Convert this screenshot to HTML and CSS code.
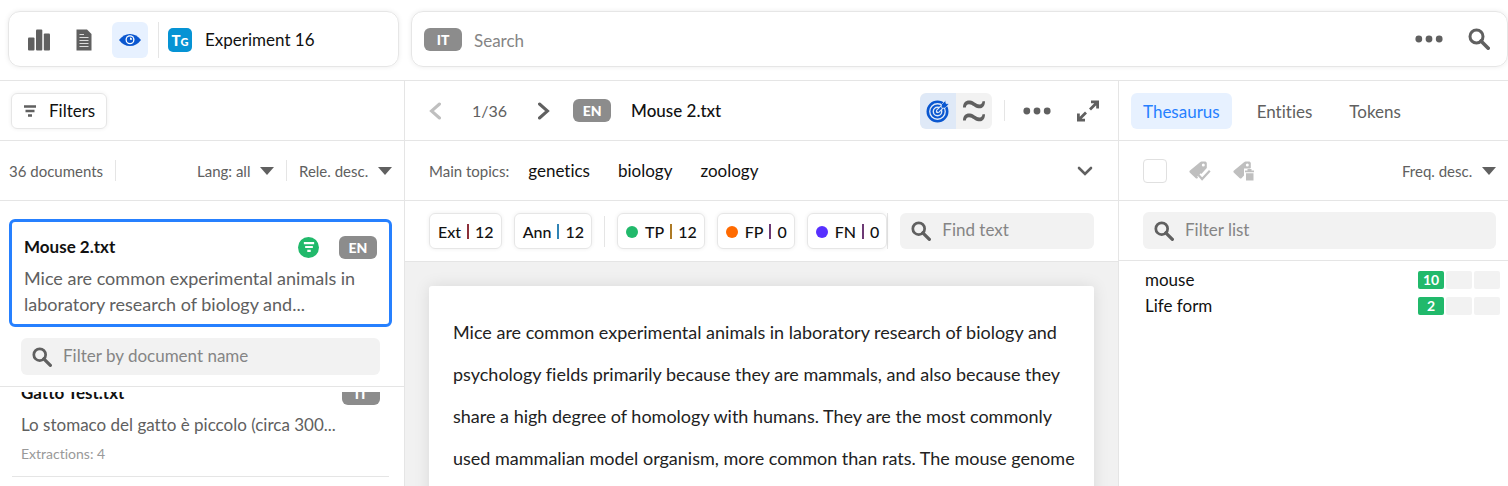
FILE: index.html
```html
<!DOCTYPE html>
<html lang="en">
<head>
<meta charset="utf-8">
<title>Experiment 16</title>
<meta name="viewport" content="width=device-width, initial-scale=1">
<link rel="stylesheet" href="styles.css">
</head>
<body>
<svg class="defs" aria-hidden="true">
  <symbol id="i-search" viewBox="0 0 22 22"><circle cx="8.500" cy="8.500" r="6.500" fill="none" stroke="currentColor" stroke-width="3"/><path d="M13 13l7.200 7.200" stroke="currentColor" stroke-width="3.600" stroke-linecap="round"/></symbol>
  <symbol id="i-dots" viewBox="0 0 28 8"><circle cx="3.800" cy="4" r="3.400" fill="currentColor"/><circle cx="14" cy="4" r="3.400" fill="currentColor"/><circle cx="24.200" cy="4" r="3.400" fill="currentColor"/></symbol>
  <symbol id="i-filter" viewBox="0 0 14 12"><path d="M1 1.500h12M2.500 6h9M5 10.500h4" stroke="currentColor" stroke-width="2.400"/></symbol>
  <symbol id="i-caret" viewBox="0 0 14 8"><path d="M0 0h14L7 8z" fill="currentColor"/></symbol>
  <symbol id="i-tag" viewBox="0 0 22 20"><path d="M12.500 0.500H16.500L17.800 1.800V7L8.500 17.300Q7.500 18 6.500 17L0.700 11.500Q0 10.500 0.700 9.700L11 1.200Q11.800.5 12.500.5z" fill="currentColor"/><circle cx="14.300" cy="4" r="1.500" fill="#fff"/></symbol>
</svg>

<header class="topbar">
  <nav class="panel nav-panel">
    <button class="icon-btn" aria-label="Statistics"><svg width="22" height="22" viewBox="0 0 22 22"><rect x="0" y="8.500" width="6.500" height="13" rx="1" fill="#606060"/><rect x="8" y="0.500" width="6.300" height="21" rx="1" fill="#606060"/><rect x="15.800" y="4.500" width="6.200" height="17" rx="1" fill="#606060"/></svg></button>
    <button class="icon-btn" aria-label="Document"><svg width="16" height="22" viewBox="0 0 16 22"><path d="M.5.500H11L15.500 5V21.500H.5z" fill="#606060"/><path d="M3.500 5.500h4.500M3.500 8.500h9M3.500 11.500h9M3.500 14.500h9M3.500 17.500h9" stroke="#ddd" stroke-width="1"/></svg></button>
    <button class="icon-btn active" aria-label="View"><svg width="22" height="14" viewBox="0 0 22 14"><path d="M0 7Q4.500 1 11 1T22 7Q17.500 13 11 13T0 7z" fill="#0a57d0"/><circle cx="11" cy="6.800" r="4.500" fill="#fff"/><circle cx="11" cy="6.800" r="3.200" fill="#0a57d0"/><path d="M11 6.800V4.600A2.200 2.200 0 0 1 13.200 6.800z" fill="#fff"/></svg></button>
    <span class="rule tall"></span>
    <span class="logo">T<small>G</small></span>
    <span class="project">Experiment 16</span>
  </nav>
  <form class="panel search-panel">
    <span class="lang">IT</span>
    <input class="search-input" type="search" placeholder="Search" aria-label="Search">
    <button class="plain" type="button" aria-label="More"><svg width="28" height="8"><use href="#i-dots"/></svg></button>
    <button class="plain" type="button" aria-label="Run search"><svg width="22" height="22"><use href="#i-search"/></svg></button>
  </form>
</header>

<main class="columns">
  <aside class="col documents">
    <div class="bar">
      <button class="btn filters"><svg width="14" height="12"><use href="#i-filter"/></svg>Filters</button>
    </div>
    <div class="bar sortbar">
      <span>36 documents</span><span class="rule"></span>
      <label class="picker push"><select aria-label="Language"><option>Lang: all</option></select><svg width="14" height="8"><use href="#i-caret"/></svg></label>
      <span class="rule"></span>
      <label class="picker"><select aria-label="Sort documents"><option>Rele. desc.</option></select><svg width="14" height="8"><use href="#i-caret"/></svg></label>
    </div>
    <div class="current">
      <article class="card">
        <div class="card-head">
          <h2>Mouse 2.txt</h2>
          <span class="match"><svg width="12" height="12" viewBox="0 0 14 12"><use href="#i-filter" width="14" height="12"/></svg></span>
          <span class="lang">EN</span>
        </div>
        <p>Mice are common experimental animals in laboratory research of biology and...</p>
      </article>
      <label class="field"><svg width="20" height="20"><use href="#i-search"/></svg><input type="text" placeholder="Filter by document name" aria-label="Filter by document name"></label>
    </div>
    <div class="list">
      <article class="item">
        <div class="card-head"><h2>Gatto Test.txt</h2><span class="lang">IT</span></div>
        <p>Lo stomaco del gatto è piccolo (circa 300...</p>
        <small>Extractions: 4</small>
      </article>
    </div>
  </aside>

  <section class="col viewer">
    <div class="bar viewbar">
      <button class="plain faint" aria-label="Previous"><svg width="12" height="18" viewBox="0 0 12 18"><path d="M10.500 2L2.500 9l8 7" fill="none" stroke="currentColor" stroke-width="3" stroke-linecap="round"/></svg></button>
      <span class="count">1/36</span>
      <button class="plain" aria-label="Next"><svg width="12" height="18" viewBox="0 0 12 18"><path d="M1.500 2l8 7-8 7" fill="none" stroke="currentColor" stroke-width="3" stroke-linecap="round"/></svg></button>
      <span class="lang">EN</span>
      <h1>Mouse 2.txt</h1>
      <div class="toggle push">
        <button class="on" aria-label="Exact"><svg width="24" height="24" viewBox="0 0 24 24" fill="none" stroke="#0a57d0"><circle cx="11.500" cy="12.500" r="9.700" stroke-width="2.600"/><circle cx="11.500" cy="12.500" r="6" stroke-width="2.200"/><circle cx="11.500" cy="12.500" r="2.600" stroke-width="1.800"/><path d="M11.500 12.500L18 6" stroke="#dfe9f7" stroke-width="4"/><path d="M11.500 12.500L18 6" stroke-width="1.800"/><path d="M15.500 5.500L19.500 1.500 20 4.500 23 5 19 9H15.500z" fill="#0a57d0" stroke="#dfe9f7" stroke-width=".6"/></svg></button>
        <button aria-label="Approximate"><svg width="24" height="24" viewBox="0 0 24 24" fill="#606060"><path id="wave" d="M1 8.500C1 3.500 4 1 8 1.500C12 2 14 5.500 17.500 5.500C19.500 5.500 20.300 4 20.500 2.200H23C23 7 20.500 9.800 16.500 9.300C12.500 8.800 10.500 5.300 7 5.300C4.800 5.300 4 6.800 3.800 8.500z"/><use href="#wave" y="13"/></svg></button>
      </div>
      <span class="rule"></span>
      <button class="plain" aria-label="More actions"><svg width="28" height="8"><use href="#i-dots"/></svg></button>
      <button class="plain" aria-label="Expand"><svg width="24" height="24" viewBox="0 0 24 24" fill="none" stroke="currentColor" stroke-width="2.800"><path d="M15 2.900h6.600V9.500M21.500 3L14 10.500M2.400 14.500v6.600H9M2.500 21L10 13.500"/></svg></button>
    </div>
    <div class="bar topics">
      <span class="label">Main topics:</span>
      <span>genetics</span><span>biology</span><span>zoology</span>
      <button class="plain push" aria-label="Show topics"><svg width="16" height="10" viewBox="0 0 16 10"><path d="M2 2l6 6 6-6" fill="none" stroke="currentColor" stroke-width="2.600" stroke-linecap="round"/></svg></button>
    </div>
    <div class="bar metrics">
      <div class="counters">
        <button class="btn">Ext <i class="bar-red"></i> 12</button>
        <button class="btn">Ann <i class="bar-blue"></i> 12</button>
        <span class="rule mid"></span>
        <button class="btn"><b class="dot green"></b>TP <i class="bar-gold"></i> 12</button>
        <button class="btn"><b class="dot orange"></b>FP <i class="bar-plum"></i> 0</button>
        <button class="btn"><b class="dot violet"></b>FN <i class="bar-plum"></i> 0</button>
      </div>
      <label class="field"><svg width="20" height="20"><use href="#i-search"/></svg><input type="text" placeholder="Find text" aria-label="Find text"></label>
    </div>
    <div class="stage">
      <article class="page">Mice are common experimental animals in laboratory research of biology and psychology fields primarily because they are mammals, and also because they share a high degree of homology with humans. They are the most commonly used mammalian model organism, more common than rats. The mouse genome</article>
    </div>
  </section>

  <aside class="col terms">
    <div class="bar tabs">
      <button class="selected">Thesaurus</button><button>Entities</button><button>Tokens</button>
    </div>
    <div class="bar termtools">
      <input class="check" type="checkbox" aria-label="Select all">
      <button class="plain faint" aria-label="Confirm tags"><svg width="22" height="20" viewBox="0 0 22 20"><use href="#i-tag" width="22" height="20"/><path d="M10 14l3.300 3.500L20.500 9.500" fill="none" stroke="#fff" stroke-width="5"/><path d="M9.500 14l3.600 4L20.800 9.800" fill="none" stroke="currentColor" stroke-width="2.200"/></svg></button>
      <button class="plain faint" aria-label="Delete tags"><svg width="22" height="20" viewBox="0 0 22 20"><use href="#i-tag" width="22" height="20"/><path d="M11 7.500h11V20H11z" fill="#fff"/><path d="M12 9.500h9v1.800h-9zM13 12.200h7.500V19.500H13zM14.500 8h4v1.500h-4z" fill="currentColor"/></svg></button>
      <label class="picker push"><select aria-label="Sort terms"><option>Freq. desc.</option></select><svg width="14" height="8"><use href="#i-caret"/></svg></label>
    </div>
    <div class="bar termfilter">
      <label class="field"><svg width="20" height="20"><use href="#i-search"/></svg><input type="text" placeholder="Filter list" aria-label="Filter list"></label>
    </div>
    <ul class="term-list">
      <li><span>mouse</span><b class="hit">10</b><b></b><b></b></li>
      <li><span>Life form</span><b class="hit">2</b><b></b><b></b></li>
    </ul>
  </aside>
</main>
</body>
</html>
```
FILE: styles.css
```css
* { box-sizing: border-box; }

body {
  margin: 0;
  height: 100vh;
  display: flex;
  flex-direction: column;
  overflow: hidden;
  background: #fff;
  color: #111;
  font: 17px/26px Lato, "Open Sans", sans-serif;
  font-variant-ligatures: none;
}

h1, h2, p, ul { margin: 0; padding: 0; }
h1, h2 { font-size: 17px; }
h1 { font-weight: 500; }
button, input, select { font: inherit; color: inherit; border: 0; background: none; margin: 0; padding: 0; }
button { cursor: pointer; }
svg { display: block; flex: none; }
input::placeholder { color: #858585; opacity: 1; }
.defs { display: none; }
.push { margin-left: auto; }
.rule { width: 1px; height: 21px; background: #e5e5e5; flex: none; }
.rule.tall { height: 36px; }
.rule.mid { height: 31px; }
.plain { display: flex; align-items: center; color: #606060; flex: none; }
.faint { color: #bfbfbf; }

.lang {
  width: 38px;
  height: 23px;
  flex: none;
  border-radius: 6px;
  background: #8c8c8c;
  color: #fff;
  font-size: 14px;
  font-weight: 900;
  line-height: 23px;
  text-align: center;
}

/* Top bar */
.topbar {
  display: grid;
  grid-template-columns: minmax(0, 391fr) minmax(0, 1097fr);
  gap: 12px;
  align-items: center;
  height: 81px;
  flex: none;
  padding: 0 0 2px 8px;
  border-bottom: 1px solid #e5e5e5;
}
.panel {
  display: flex;
  align-items: center;
  height: 56px;
  border: 1px solid #e6e6e6;
  border-radius: 12px;
  box-shadow: 0 0 5px rgba(0, 0, 0, .08);
}
.nav-panel { padding: 2px 12px 0; }
.icon-btn {
  display: flex;
  align-items: center;
  justify-content: center;
  width: 36px;
  height: 36px;
  margin-right: 10px;
  border-radius: 6px;
}
.icon-btn.active { background: #e7f1ff; }
.icon-btn:first-child { margin-right: 9px; }
.logo {
  width: 24px;
  height: 24px;
  margin: 0 13px 0 9px;
  border-radius: 5px;
  background: #0693d4;
  color: #fff;
  font-size: 15px;
  font-weight: 900;
  line-height: 24px;
  text-align: center;
}
.logo small { font-size: 11px; }
.search-panel { padding: 0 17px 0 12px; }
.search-input { flex: 1; min-width: 0; margin: 0 12px; padding-top: 4px; }
.search-panel .plain + .plain { margin-left: 25px; }

/* Columns */
.columns {
  flex: 1;
  min-height: 0;
  display: grid;
  grid-template-columns: minmax(0, 404fr) minmax(0, 714fr) minmax(0, 390fr);
}
.col { display: flex; flex-direction: column; min-width: 0; min-height: 0; overflow: hidden; }
.col + .col { border-left: 1px solid #e5e5e5; }
.bar {
  display: flex;
  align-items: center;
  flex: none;
  height: 60px;
  border-bottom: 1px solid #e5e5e5;
}

.btn {
  display: flex;
  align-items: center;
  height: 36px;
  padding: 1px 7px 0 8px;
  border: 1px solid #e6e6e6;
  border-radius: 6px;
  box-shadow: 0 0 4px rgba(0, 0, 0, .07);
  white-space: nowrap;
}

.field {
  display: flex;
  align-items: center;
  gap: 11px;
  height: 37px;
  padding: 0 11px;
  border-radius: 6px;
  background: #f2f2f2;
  color: #606060;
}
.field input { flex: 1; min-width: 0; width: 0; padding-bottom: 2px; }

.picker { display: flex; align-items: center; color: #606060; }
.picker select { appearance: none; }
.picker svg { margin-left: 9px; pointer-events: none; }

/* Documents */
.documents .bar { padding: 0 12px 0 11px; }
.documents .filters { gap: 12px; padding: 1px 11px 0 11px; }
.filters svg { color: #606060; }
.documents .sortbar { padding-left: 9px; }
.sortbar, .termtools { font-size: 15px; color: #606060; }
.sortbar .rule { margin: 0 12px; }
.current { padding: 18px 12px 11px 9px; border-bottom: 1px solid #e5e5e5; }
.card { padding: 12px 12px 7px; border: 3px solid #2680ff; border-radius: 6px; color: #606060; }
.card p { font-size: 18px; }
.card-head { display: flex; align-items: center; gap: 20px; margin-bottom: 6px; }
.card-head h2 { flex: 1; color: #111; line-height: 26px; }
.card .card-head { margin-bottom: 5px; }
.match {
  display: flex;
  align-items: center;
  justify-content: center;
  width: 21px;
  height: 21px;
  border-radius: 50%;
  background: #21b96b;
  color: #fff;
}
.current .field { margin: 11px 12px 0; }
.list { flex: 1; min-height: 0; margin: 5px 15px 0 12px; overflow: hidden; }
.item { margin-top: -12px; padding: 0 9px 9px; border-bottom: 1px solid #e5e5e5; color: #606060; }
.item small { display: block; margin-top: 3px; font-size: 14px; color: #999; }

/* Viewer */
.viewbar { padding: 0 18px 0 24px; }
.count { margin: 0 31px; font-size: 16px; color: #606060; }
.viewbar .lang { margin: 0 20px 0 23px; }
.toggle { display: flex; border-radius: 6px; background: #f2f2f2; overflow: hidden; }
.toggle button { display: flex; align-items: center; justify-content: center; width: 36px; height: 36px; }
.toggle .on { background: #dfe9f7; border-radius: 6px 0 0 6px; }
.viewbar .rule { margin: 0 18px 0 12px; }
.viewbar .plain:last-child { margin-left: 25px; }
.topics { gap: 28px; padding: 0 25px 0 24px; }
.topics .label { margin-right: -9px; font-size: 15px; color: #606060; }
.viewer .metrics { height: 61px; gap: 12px; padding: 0 24px; font-size: 16px; }
.counters { display: flex; align-items: center; gap: 12px; font-weight: 500; border-right: 1px solid #e5e5e5; }
.metrics i { width: 2px; height: 15px; margin: 0 6px; }
.metrics .field { flex: 1; height: 36px; }
.metrics .field input { font-size: 17px; }
.bar-red { background: #8c2f39; }
.bar-blue { background: #2f83b5; }
.bar-gold { background: #ad7a25; }
.bar-plum { background: #6d3a75; }
.dot { width: 12px; height: 12px; margin-right: 7px; border-radius: 50%; }
.green { background: #21b96b; }
.orange { background: #ff6a00; }
.violet { background: #5730ff; }
.stage { flex: 1; min-height: 0; padding: 24px 24px 0; background: #f1f1f1; overflow: hidden; }
.page {
  min-height: 100%;
  padding: 25px 12px 25px 24px;
  border-radius: 3px;
  background: #fff;
  box-shadow: 0 0 16px rgba(0, 0, 0, .1);
  color: #222;
  font-size: 18px;
  line-height: 42px;
}

/* Terms */
.tabs { gap: 13px; padding: 0 12px; color: #606060; }
.tabs button { height: 36px; padding: 2px 12px 0; border-radius: 6px; }
.tabs .selected { background: #e7f1ff; color: #2680ff; }
.termtools { padding: 0 12px 0 24px; }
.check { appearance: none; width: 24px; height: 24px; border: 1px solid #e0e0e0; border-radius: 4px; }
.termtools .plain { margin-left: 22px; }
.termfilter { padding: 0 12px 0 24px; }
.termfilter .field { flex: 1; }
.term-list { list-style: none; padding: 6px 8px 0 26px; }
.term-list li { display: flex; align-items: center; gap: 2px; }
.term-list span { flex: 1; }
.term-list b {
  width: 26px;
  height: 18px;
  border-radius: 2px;
  background: #f2f2f2;
  font-size: 14px;
  line-height: 18px;
  text-align: center;
}
.term-list .hit { background: #21b96b; color: #fff; }
```
